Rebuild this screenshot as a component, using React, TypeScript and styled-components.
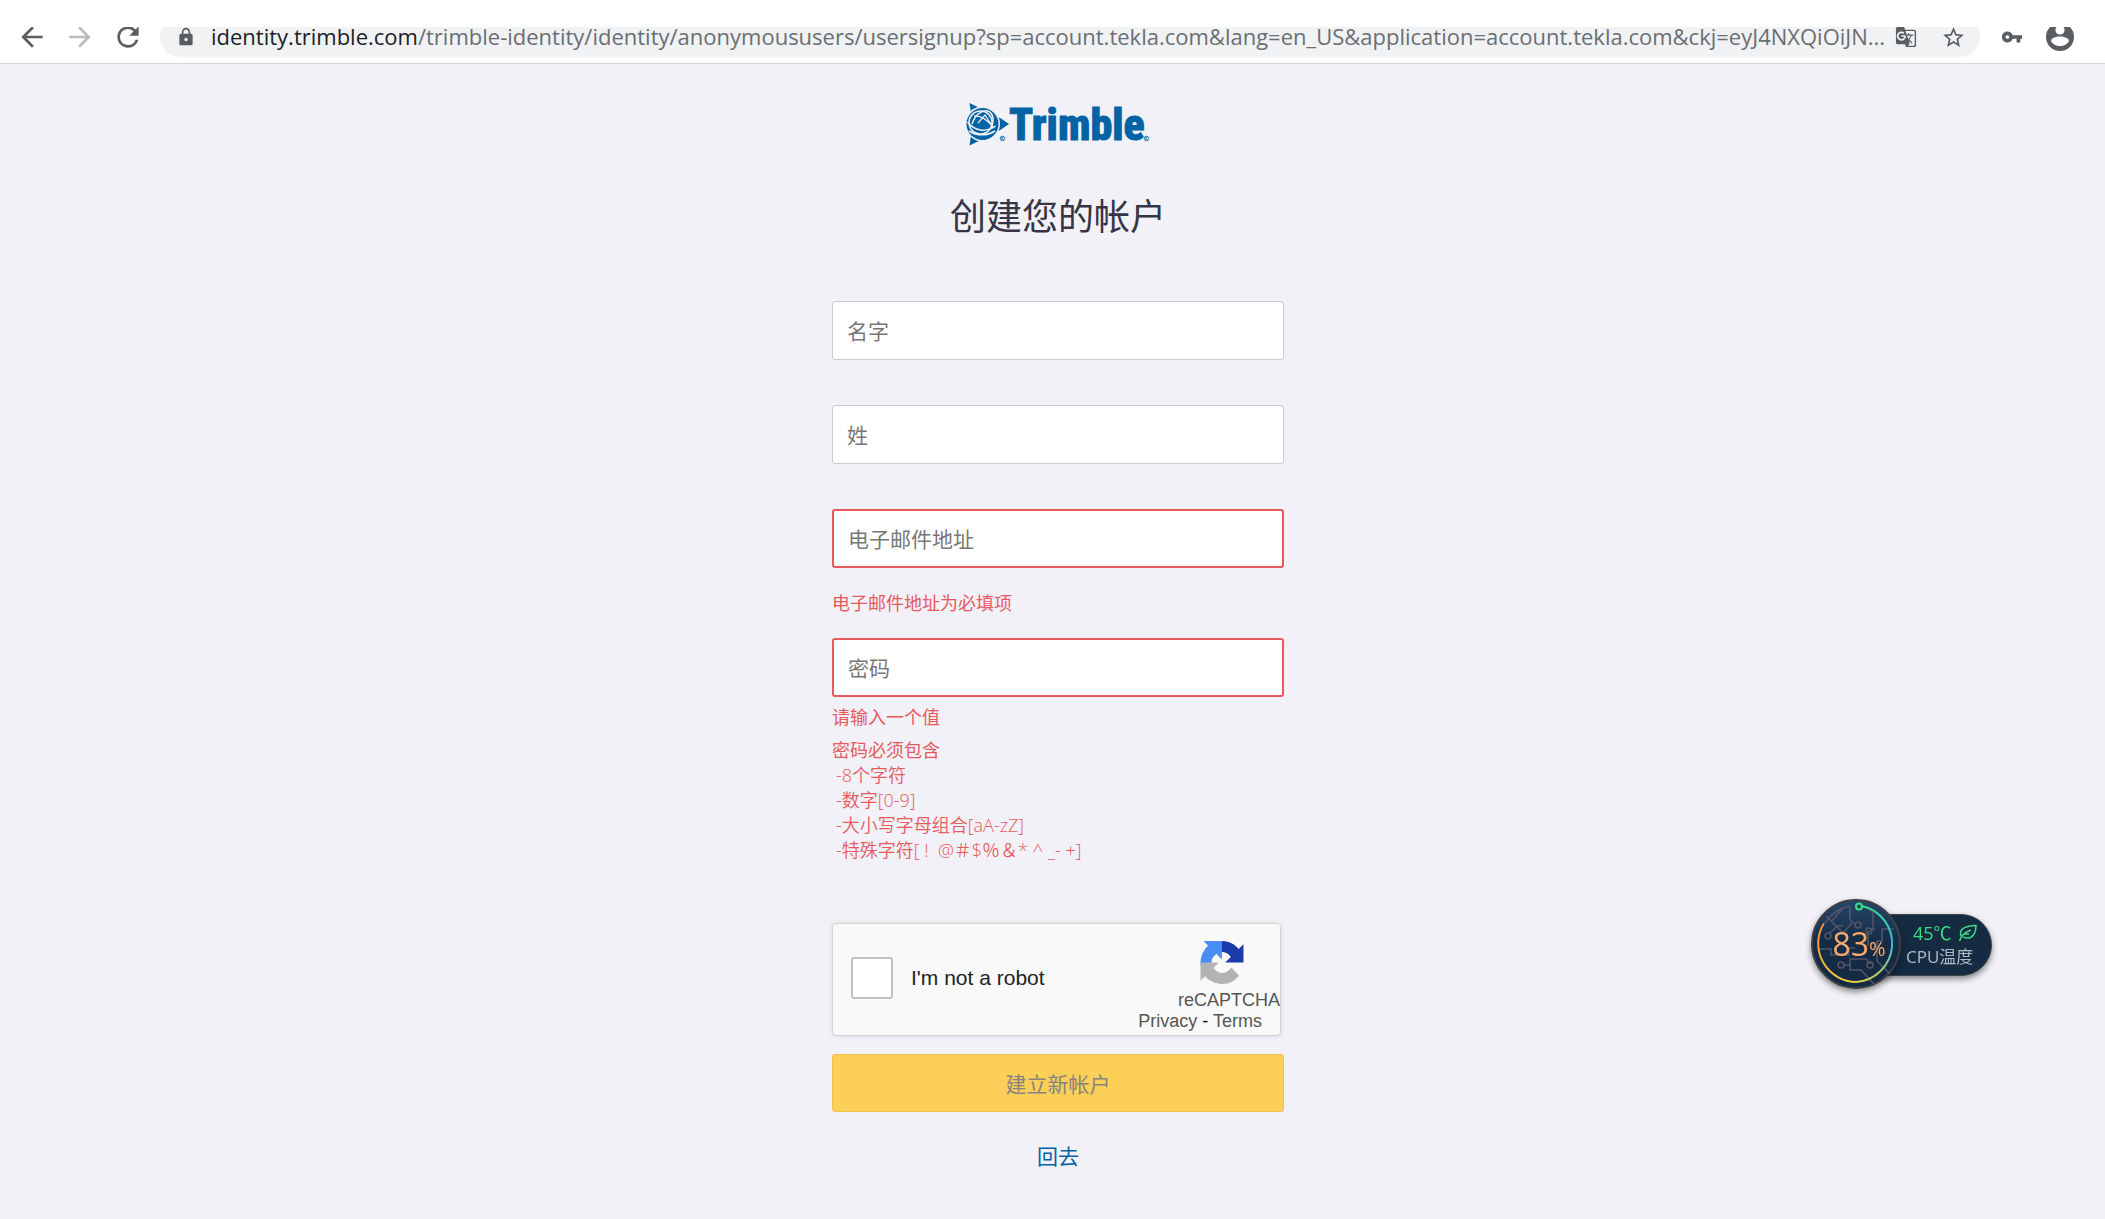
import React from "react";
import styled, { createGlobalStyle } from "styled-components";
import {
  MdArrowBack,
  MdArrowForward,
  MdRefresh,
  MdLock,
  MdGTranslate,
  MdStarBorder,
  MdVpnKey,
} from "react-icons/md";

const uiFont = `"Open Sans", "Noto Sans CJK SC", sans-serif`;

const GlobalStyle = createGlobalStyle`
  *, *::before, *::after { box-sizing: border-box; }
  body {
    margin: 0;
    background: #f2f1f7;
    font-family: ${uiFont};
  }
`;

const Page = styled.div`
  min-height: 100vh;
  display: flex;
  flex-direction: column;
`;

/* ---------- browser toolbar ---------- */

const Toolbar = styled.header`
  padding-top: 27px;
  background: #fff;
  border-bottom: 1px solid #d5d6dc;
`;

const ToolbarClip = styled.div`
  height: 36px;
  padding-bottom: 6px;
  display: flex;
  align-items: flex-end;
  overflow: hidden;
`;

const ToolbarRow = styled.div`
  flex: 1;
  min-width: 0;
  height: 40px;
  padding: 0 29px 0 16px;
  display: flex;
  align-items: center;
  gap: 16px;
`;

const ToolButton = styled.button<{ $faded?: boolean }>`
  flex: none;
  width: 32px;
  height: 32px;
  padding: 0;
  border: 0;
  background: none;
  display: flex;
  align-items: center;
  justify-content: center;
  color: ${(p) => (p.$faded ? "#babcbe" : "#5a5d61")};
`;

const AddressBar = styled.div`
  flex: 1;
  min-width: 0;
  height: 40px;
  padding: 0 11px 0 16px;
  display: flex;
  align-items: center;
  border-radius: 20px;
  background: #f0f2f4;
  color: #5a5d61;
`;

const BarActions = styled.div`
  flex: none;
  display: flex;
  gap: 15px;
`;

const Url = styled.div`
  flex: 1;
  min-width: 0;
  padding: 0 0 2px 15px;
  overflow: hidden;
  white-space: nowrap;
  font-size: 22px;
  line-height: 30px;
  color: #6b6e72;
`;

const Host = styled.span`
  color: #202124;
`;

/* ---------- sign-up form ---------- */

const Main = styled.main`
  flex: 1;
  padding: 38px 0 44px 11px;
  display: flex;
  flex-direction: column;
  align-items: center;
`;

const Title = styled.h1`
  margin: 47px 0 60px;
  font-weight: 400;
  font-size: 36px;
  line-height: 48px;
  color: #363545;
`;

const Form = styled.form`
  width: 452px;
  max-width: 100%;
  display: flex;
  flex-direction: column;
`;

const Field = styled.div<{ $tight?: boolean }>`
  display: flex;
  flex-direction: column;
  margin-bottom: ${(p) => (p.$tight ? 0 : 45)}px;
`;

const TextInput = styled.input<{ $invalid?: boolean }>`
  width: 100%;
  height: 59px;
  padding: 0 14px;
  border: ${(p) => (p.$invalid ? "2px solid #e65a5d" : "1px solid #cccbd3")};
  border-radius: 3px;
  background: #fff;
  font: 21px/32px ${uiFont};
  color: #363545;
  outline: none;

  &::placeholder {
    color: #777;
    opacity: 1;
  }
`;

const ErrorText = styled.p<{ $gap: number; $after?: number }>`
  margin: ${(p) => p.$gap}px 0 ${(p) => p.$after || 0}px;
  font-size: 18px;
  line-height: 25px;
  color: #e65a5d;
`;

const RuleList = styled.ul`
  margin: 0 0 60px;
  padding: 0 0 0 4px;
  list-style: none;
  font-size: 18px;
  font-weight: 350;
  line-height: 25px;
  color: #e65a5d;
`;

const Captcha = styled.div`
  width: 449px;
  max-width: 100%;
  height: 113px;
  padding: 0 0 3px 18px;
  display: flex;
  align-items: center;
  border: 1px solid #d3d3d3;
  border-radius: 4px;
  background: #f9f9f9;
  box-shadow: 0 0 5px rgba(0, 0, 0, 0.1);
  font-family: "Liberation Sans", Arial, sans-serif;
`;

const CaptchaBox = styled.input`
  appearance: none;
  flex: none;
  width: 42px;
  height: 42px;
  margin: 0 18px 0 0;
  border: 2px solid #c1c1c1;
  border-radius: 3px;
  background: #fff;
`;

const CaptchaLabel = styled.label`
  flex: 1;
  font-size: 21px;
  line-height: 24px;
  color: #222;
`;

const CaptchaBrand = styled.div`
  align-self: stretch;
  display: flex;
  flex-direction: column;
  align-items: flex-end;
  padding-top: 17px;
  color: #555;
`;

const CaptchaMark = styled.svg`
  width: 44px;
  height: 44px;
  margin-right: 36px;
`;

const CaptchaName = styled.span`
  margin-top: 6px;
  font-size: 18px;
  line-height: 21px;
`;

const CaptchaLinks = styled.span`
  margin-right: 18px;
  font-size: 18px;
  line-height: 21px;
  color: #000;

  a {
    color: #555;
    text-decoration: none;
  }
`;

const Submit = styled.button`
  height: 58px;
  margin-top: 18px;
  padding: 2px 0 0;
  border: 1px solid #edc04f;
  border-radius: 3px;
  background: #fccf58;
  font: 21px/32px ${uiFont};
  color: #86837f;
`;

const BackLink = styled.a`
  margin-top: 28px;
  align-self: center;
  font-size: 21px;
  line-height: 32px;
  color: #0063a3;
  text-decoration: none;
`;

/* ---------- floating monitor ---------- */

const Monitor = styled.aside`
  position: fixed;
  top: 899px;
  right: 113px;
  display: flex;
  align-items: center;
`;

const Dial = styled.div`
  position: relative;
  z-index: 1;
  width: 90px;
  height: 90px;
  border-radius: 50%;
  box-shadow: 0 3px 6px rgba(0, 0, 0, 0.45);
`;

const DialValue = styled.div`
  position: absolute;
  inset: 0;
  display: flex;
  align-items: baseline;
  justify-content: center;
  padding-left: 6px;
  font-size: 32px;
  line-height: 90px;
  color: #fbab6c;

  small {
    font-size: 20px;
  }
`;

const Pill = styled.div`
  width: 137px;
  height: 62px;
  margin: 2px 0 0 -46px;
  padding-left: 50px;
  display: flex;
  flex-direction: column;
  justify-content: center;
  border: 1px solid #3d434a;
  border-radius: 0 31px 31px 0;
  background: #152b42;
  box-shadow: 0 3px 6px rgba(0, 0, 0, 0.45);
`;

const Temperature = styled.div`
  display: flex;
  align-items: center;
  gap: 6px;
  padding-left: 7px;
  font-size: 18px;
  line-height: 24px;
  color: #3ddc84;
`;

const PillLabel = styled.div`
  font-size: 17px;
  line-height: 24px;
  color: #b3bac4;
`;

const Avatar = () => (
  <svg width="30" height="30" viewBox="0 0 30 30" aria-hidden="true">
    <circle cx="15" cy="15" r="14" fill="#5a5d61" />
    <circle cx="15" cy="8" r="4.6" fill="#fff" />
    <path d="M6 19c0-3 4.500-4.500 9-4.500s9 1.500 9 4.500c-1.500 3-5 5-9 5s-7.500-2-9-5z" fill="#fff" />
  </svg>
);

const Wordmark = styled.text`
  font-family: "Roboto Condensed", Roboto, sans-serif;
  font-weight: 800;
  font-size: 44px;
  fill: #0063a3;
  stroke: #0063a3;
  stroke-width: 1px;
`;

const TrimbleLogo = () => (
  <svg width="184" height="44" viewBox="0 0 184 44" overflow="visible" role="img" aria-label="Trimble">
    <path fill="#0063a3" d="M3.500 1 L21 9.500 L35 16.500 L43 22 L35 27.500 L21 35 L3.500 43.500 L5 33 L5 11 Z" />
    <circle cx="16.500" cy="22" r="17.500" fill="#f2f1f7" />
    <circle cx="16.500" cy="22" r="16" fill="#0063a3" />
    <g fill="none" stroke="#f2f1f7" strokeWidth="1.500">
      <circle cx="14.500" cy="20.500" r="11.500" />
      <path d="M1.500 20c7 9 18 11 28 4" />
      <path d="M3 29c8 5 18 5 26 0" />
      <path d="M6 22C9 13 15 8 22 9c6 3 6 10 3 18" />
      <path d="M12 21l7-8 6 9M8 14c6-1 14 4 20 12" strokeWidth="1.200" />
    </g>
    <g fill="none" stroke="#0063a3" strokeWidth="0.800">
      <circle cx="36.500" cy="36.500" r="2.300" />
      <circle cx="180.500" cy="36.500" r="2.300" />
      <path d="M35.700 38v-3h1.200v1.500h-1.200M36.500 36.500l.9 1.500M179.700 38v-3h1.200v1.500h-1.200M180.500 36.500l.9 1.500" strokeWidth="0.600" />
    </g>
    <Wordmark x="43" y="38">Trimble</Wordmark>
  </svg>
);

const DialArt = () => (
  <svg width="90" height="90" viewBox="0 0 90 90" aria-hidden="true">
    <defs>
      <linearGradient id="face" x1="0" y1="0" x2="0" y2="1">
        <stop offset="0" stopColor="#26466c" />
        <stop offset="0.450" stopColor="#162c46" />
        <stop offset="1" stopColor="#142a42" />
      </linearGradient>
      <linearGradient id="cool" x1="0" y1="0" x2="0" y2="1">
        <stop offset="0" stopColor="#3ddc84" />
        <stop offset="0.500" stopColor="#35b8e0" />
        <stop offset="1" stopColor="#d8cf4a" />
      </linearGradient>
      <linearGradient id="warm" x1="0" y1="1" x2="0" y2="0">
        <stop offset="0" stopColor="#f2c83c" />
        <stop offset="1" stopColor="#f08a3c" />
      </linearGradient>
    </defs>
    <circle cx="45" cy="45" r="44" fill="url(#face)" stroke="#3c4147" strokeWidth="2" />
    <g fill="none" stroke="#565467" strokeWidth="1.500">
      <path d="M14 24a38 38 0 0 1 25-17" />
      <path d="M39 8v13l5 4M15 17l17 17M31 10l-11 13M32 34l9-10" />
      <path d="M18 35l8-8h6" />
      <circle cx="47" cy="26" r="3" />
      <circle cx="17" cy="37" r="3" />
      <path d="M8 50h12v6h18v-7h6" />
      <path d="M62 13v16M57 47V33l4-3h3" />
      <circle cx="58" cy="32" r="3" />
      <path d="M83 30H71v12h-5v20l13 13" />
      <path d="M32 66h7v-6h16l5 5M39 66v5h11l13 14" />
      <circle cx="30" cy="66" r="3" />
      <circle cx="59" cy="66" r="3" />
    </g>
    <g fill="none" strokeWidth="2" strokeLinecap="round">
      <path d="M51 7a38.500 38.500 0 0 1-6 76" stroke="url(#cool)" />
      <path d="M45 83a38.500 38.500 0 0 1-32.500-58" stroke="url(#warm)" />
      <circle cx="48" cy="7.500" r="3" stroke="#3ddc84" fill="#1f3d60" />
    </g>
  </svg>
);

const Leaf = () => (
  <svg width="20" height="18" viewBox="0 0 20 18" fill="none" stroke="#3ddc84" strokeWidth="1.500" aria-hidden="true">
    <path d="M3 12C1 6 5 2 18 1.500c0 8-4 13-9 12.500-2 0-3-1-4-1" />
    <path d="M1.500 17C3 12 7 8 13 6M6 10l5 0" />
  </svg>
);

const passwordRules = [
  "-8个字符",
  "-数字[0-9]",
  "-大小写字母组合[aA-zZ]",
  "-特殊字符[ ! \u00a0@＃$％＆* ^ _- +]",
];

export default function App() {
  return (
    <Page>
      <GlobalStyle />
      <Toolbar>
        <ToolbarClip>
          <ToolbarRow>
            <ToolButton type="button" aria-label="Back"><MdArrowBack size={32} /></ToolButton>
            <ToolButton type="button" aria-label="Forward" $faded><MdArrowForward size={32} /></ToolButton>
            <ToolButton type="button" aria-label="Reload"><MdRefresh size={32} /></ToolButton>
            <AddressBar>
              <MdLock size={20} />
              <Url>
                <Host>identity.trimble.com</Host>
                /trimble-identity/identity/anonymoususers/usersignup?sp=account.tekla.com&amp;lang=en_US&amp;application=account.tekla.com&amp;ckj=eyJ4NXQiOiJN...
              </Url>
              <BarActions>
                <ToolButton type="button" aria-label="Translate"><MdGTranslate size={22} /></ToolButton>
                <ToolButton type="button" aria-label="Bookmark"><MdStarBorder size={25} /></ToolButton>
              </BarActions>
            </AddressBar>
            <ToolButton type="button" aria-label="Passwords"><MdVpnKey size={22} /></ToolButton>
            <ToolButton type="button" aria-label="Profile"><Avatar /></ToolButton>
          </ToolbarRow>
        </ToolbarClip>
      </Toolbar>

      <Main>
        <TrimbleLogo />
        <Title>创建您的帐户</Title>
        <Form onSubmit={(e) => e.preventDefault()}>
          <Field>
            <TextInput type="text" aria-label="名字" placeholder="名字" />
          </Field>
          <Field>
            <TextInput type="text" aria-label="姓" placeholder="姓" />
          </Field>
          <Field $tight>
            <TextInput type="email" aria-label="电子邮件地址" placeholder="电子邮件地址" $invalid />
            <ErrorText $gap={23} $after={22}>电子邮件地址为必填项</ErrorText>
          </Field>
          <Field $tight>
            <TextInput type="password" aria-label="密码" placeholder="密码" $invalid />
            <ErrorText $gap={8}>请输入一个值</ErrorText>
            <ErrorText $gap={8}>密码必须包含</ErrorText>
            <RuleList>
              {passwordRules.map((rule) => (
                <li key={rule}>{rule}</li>
              ))}
            </RuleList>
          </Field>
          <Captcha>
            <CaptchaBox id="robot" type="checkbox" />
            <CaptchaLabel htmlFor="robot">I'm not a robot</CaptchaLabel>
            <CaptchaBrand>
              <CaptchaMark viewBox="0 0 64 64" aria-hidden="true">
                <path fill="#1c3aa9" d="M64 31.955l-.033-1.370V4.687l-7.160 7.160C50.948 4.674 42.033.093 32.050.093c-10.400 0-19.622 4.960-25.458 12.640l11.736 11.860a15.550 15.550 0 0 1 4.754-5.334c2.050-1.600 4.952-2.906 8.968-2.906.485 0 .86.057 1.135.163 4.976.393 9.288 3.140 11.828 7.124l-8.307 8.307L64 31.953" />
                <path fill="#4a8df6" d="M31.862.094l-1.370.033H4.594l7.160 7.160C4.580 13.147 0 22.060 0 32.046c0 10.400 4.960 19.622 12.640 25.458L24.500 45.768a15.550 15.550 0 0 1-5.334-4.754c-1.600-2.050-2.906-4.952-2.906-8.968 0-.485.057-.86.163-1.135.393-4.976 3.140-9.288 7.124-11.828l8.307 8.307L31.860.095" />
                <path fill="#b3b3b3" d="M.001 32.045l.033 1.370v25.898l7.160-7.160c5.860 7.173 14.774 11.754 24.760 11.754 10.400 0 19.622-4.960 25.458-12.640l-11.736-11.860a15.550 15.550 0 0 1-4.754 5.334c-2.050 1.600-4.952 2.906-8.968 2.906-.485 0-.86-.057-1.135-.163-4.976-.393-9.288-3.140-11.828-7.124l8.307-8.307c-10.522.040-22.400.066-27.295-.005" />
              </CaptchaMark>
              <CaptchaName>reCAPTCHA</CaptchaName>
              <CaptchaLinks>
                <a href="#privacy">Privacy</a> - <a href="#terms">Terms</a>
              </CaptchaLinks>
            </CaptchaBrand>
          </Captcha>
          <Submit type="submit">建立新帐户</Submit>
          <BackLink href="#back">回去</BackLink>
        </Form>
      </Main>

      <Monitor aria-label="CPU温度">
        <Dial>
          <DialArt />
          <DialValue>83<small>%</small></DialValue>
        </Dial>
        <Pill>
          <Temperature>45℃<Leaf /></Temperature>
          <PillLabel>CPU温度</PillLabel>
        </Pill>
      </Monitor>
    </Page>
  );
}
